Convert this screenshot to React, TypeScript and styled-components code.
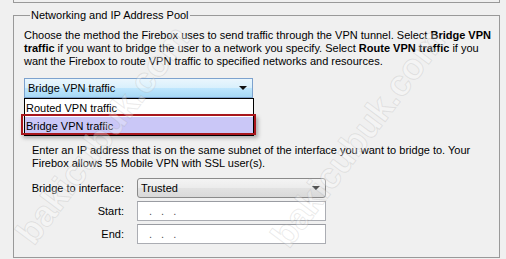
import React from 'react';
import styled, { createGlobalStyle } from 'styled-components';

const Global = createGlobalStyle`
    html, body {
        margin: 0;
        padding: 0;
        background: #f0f0f0;
        overflow: hidden;
    }
    body {
        font-family: "Liberation Sans", Arial, sans-serif;
        font-size: 11px;
        color: #000;
    }
`;

const Page = styled.div`
    position: relative;
    width: 506px;
    height: 259px;
    padding: 0 6px 0 13px;
    box-sizing: border-box;
    overflow: hidden;
`;

const TopPanel = styled.div`
    height: 3px;
    border: 1px solid #999;
    border-top: none;
    box-sizing: border-box;
`;

const Group = styled.fieldset`
    margin: 6px 0 0 0;
    padding: 0 0 13px 10px;
    border: 1px solid #999;
    min-width: 0;
`;

const Legend = styled.legend`
    margin-left: 6px;
    padding: 0 1px;
    line-height: 13px;
`;

const Description = styled.p`
    margin: 7px 0 0 0;
    width: 470px;
    line-height: 13px;
`;

const ComboWrap = styled.div`
    position: relative;
    margin-top: 10px;
    width: 229px;
`;

const Arrow = styled.span`
    width: 0;
    height: 0;
    border-left: 4px solid transparent;
    border-right: 4px solid transparent;
    border-top: 4px solid #111;
`;

const Combo = styled.div<{ $hover?: boolean }>`
    display: flex;
    align-items: center;
    justify-content: space-between;
    height: 20px;
    box-sizing: border-box;
    padding: 0 5px 0 3px;
    border: 1px solid ${p => (p.$hover ? '#7da2ce' : '#8a8a8a')};
    border-radius: ${p => (p.$hover ? '0' : '3px')};
    background: ${p =>
        p.$hover
            ? 'linear-gradient(#eaf6fd 0%, #d9f0fc 48%, #bee6fd 52%, #a7d9f5 100%)'
            : 'linear-gradient(#f4f4f4 0%, #ececec 48%, #e2e2e2 52%, #d9d9d9 100%)'};
`;

const Popup = styled.div`
    position: absolute;
    top: 100%;
    left: 0;
    width: 230px;
    border: 1px solid #000;
    box-sizing: border-box;
    background: #fff;
    z-index: 2;
`;

const Option = styled.div<{ $selected?: boolean }>`
    height: 18px;
    line-height: 18px;
    padding-left: 1px;
    background: ${p => (p.$selected ? '#cac7f7' : '#fff')};
`;

const Callout = styled.div`
    position: absolute;
    left: -4px;
    top: 15px;
    width: 235px;
    height: 21px;
    box-sizing: border-box;
    border: 2px solid #a8161c;
    box-shadow: 2px 3px 4px rgba(0, 0, 0, 0.3);
`;

const Section = styled.div`
    padding-left: 8px;
    margin-top: 46px;
`;

const Note = styled.p`
    margin: 0;
    line-height: 13px;
`;

const FormGrid = styled.div`
    display: grid;
    grid-template-columns: 92px 189px;
    column-gap: 13px;
    row-gap: 3px;
    margin-top: 8px;
    align-items: center;
`;

const Label = styled.span`
    justify-self: end;
    white-space: nowrap;
`;

const Input = styled.div`
    display: flex;
    gap: 9px;
    height: 20px;
    box-sizing: border-box;
    padding-left: 11px;
    align-items: center;
    border: 1px solid #abadb3;
    border-top-color: #9a9ca2;
    background: #fff;
    color: #555;
`;

const Watermark = styled.span<{ $x: number; $y: number }>`
    position: absolute;
    left: ${p => p.$x}px;
    top: ${p => p.$y}px;
    transform: translate(-50%, -50%) rotate(-53deg);
    font-family: "Liberation Sans", Arial, sans-serif;
    font-size: 36px;
    font-weight: bold;
    white-space: nowrap;
    color: rgba(255, 255, 255, 0.3);
    -webkit-text-stroke: 1px rgba(150, 150, 150, 0.2);
    pointer-events: none;
    user-select: none;
    z-index: 3;
`;

export default function App() {
    return (
        <Page>
            <Global />
            <TopPanel />
            <Group>
                <Legend>Networking and IP Address Pool</Legend>
                <Description>
                    Choose the method the Firebox uses to send traffic through the VPN tunnel. Select <b>Bridge VPN
                    traffic</b> if you want to bridge the user to a network you specify. Select <b>Route VPN traffic</b> if you
                    want the Firebox to route VPN traffic to specified networks and resources.
                </Description>
                <ComboWrap>
                    <Combo $hover>
                        <span>Bridge VPN traffic</span>
                        <Arrow />
                    </Combo>
                    <Popup>
                        <Option>Routed VPN traffic</Option>
                        <Option $selected>Bridge VPN traffic</Option>
                        <Callout />
                    </Popup>
                </ComboWrap>
                <Section>
                    <Note>
                        Enter an IP address that is on the same subnet of the interface you want to bridge to. Your
                        <br />
                        Firebox allows 55 Mobile VPN with SSL user(s).
                    </Note>
                    <FormGrid>
                        <Label>Bridge to interface:</Label>
                        <Combo>
                            <span>Trusted</span>
                            <Arrow />
                        </Combo>
                        <Label>Start:</Label>
                        <Input><span>.</span><span>.</span><span>.</span></Input>
                        <Label>End:</Label>
                        <Input><span>.</span><span>.</span><span>.</span></Input>
                    </FormGrid>
                </Section>
            </Group>
            <Watermark $x={103} $y={135} aria-hidden>bakicubuk.com</Watermark>
            <Watermark $x={358} $y={138} aria-hidden>bakicubuk.com</Watermark>
        </Page>
    );
}
